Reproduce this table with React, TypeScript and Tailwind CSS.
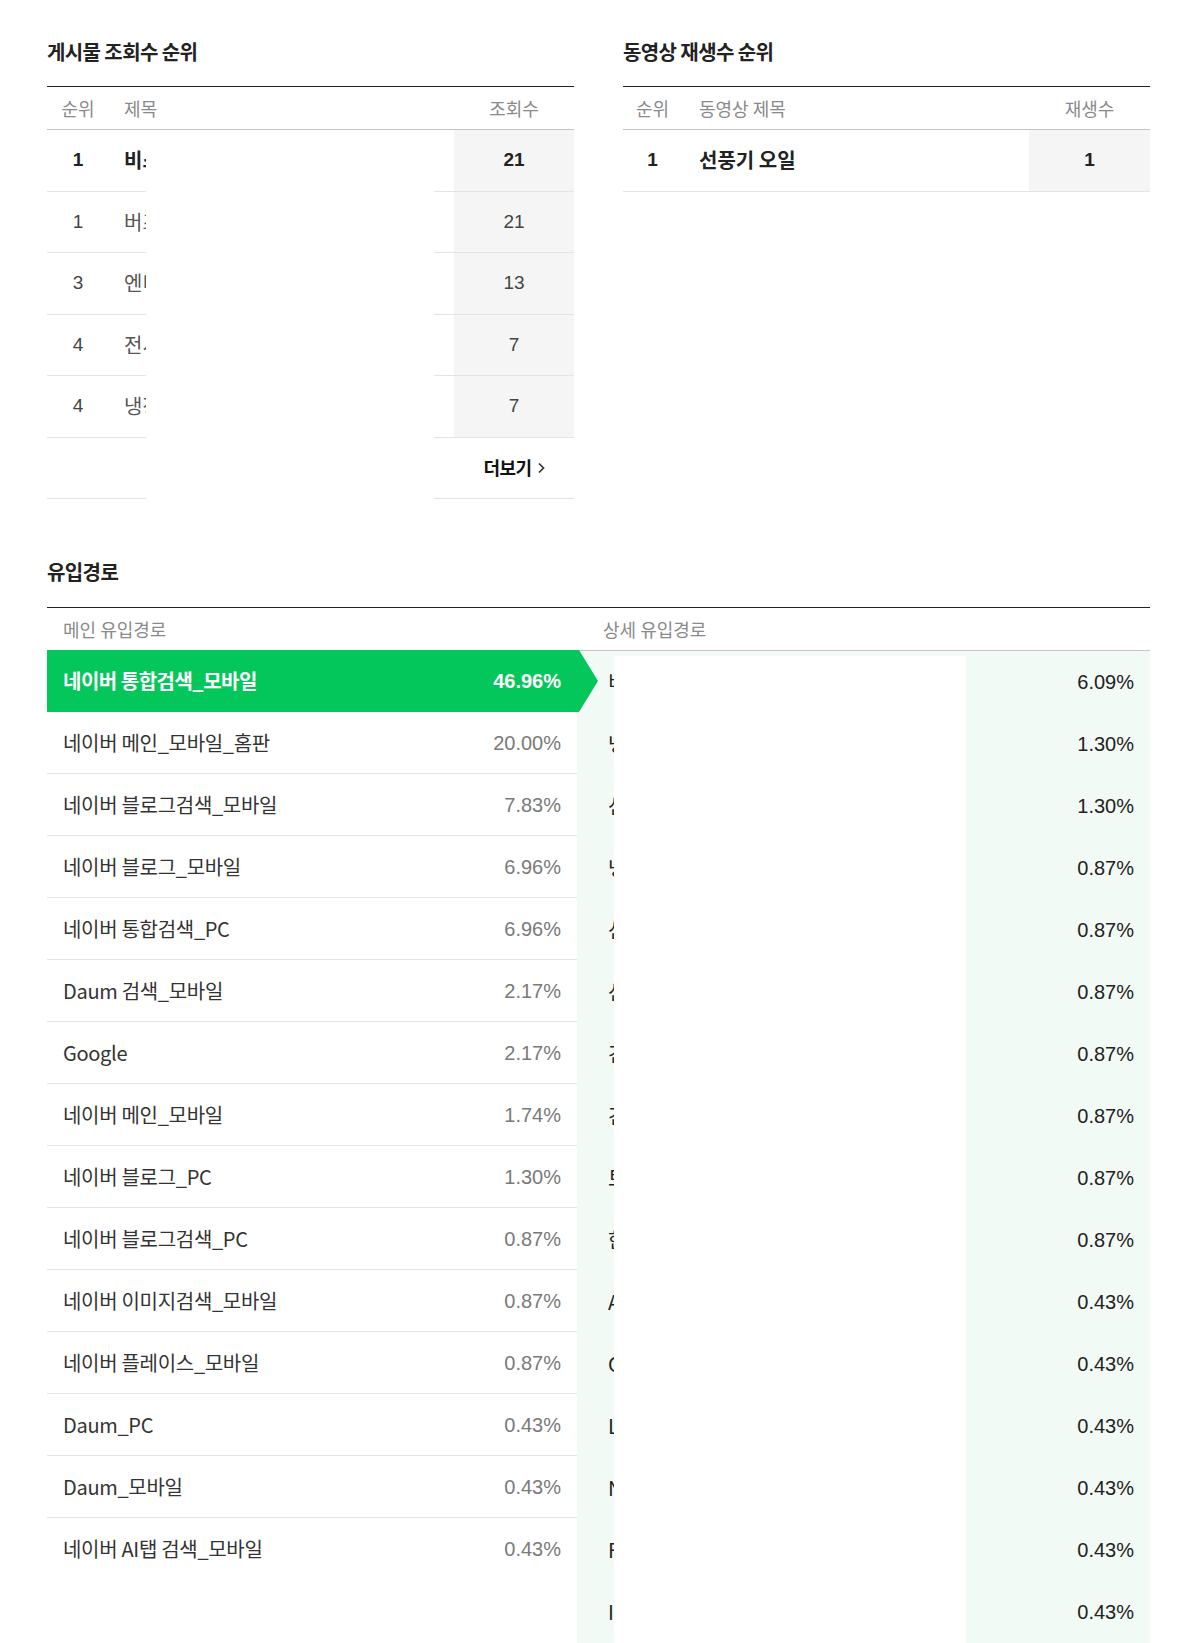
const KR = "font-['Noto_Sans_CJK_KR','Noto_Sans',sans-serif]";
const NUM = "font-['Liberation_Sans','Noto_Sans_CJK_KR',sans-serif]";

const posts = [
  { rank: 1, title: "비스포크 제트 청소기 후기", views: 21, bold: true },
  { rank: 1, title: "버즈 케이스 추천", views: 21 },
  { rank: 3, title: "엔비디아 그래픽카드 비교", views: 13 },
  { rank: 4, title: "전시회 방문 후기", views: 7 },
  { rank: 4, title: "냉장고 정리 꿀팁", views: 7 },
];

const mainRoutes = [
  { label: "네이버 통합검색_모바일", pct: "46.96%" },
  { label: "네이버 메인_모바일_홈판", pct: "20.00%" },
  { label: "네이버 블로그검색_모바일", pct: "7.83%" },
  { label: "네이버 블로그_모바일", pct: "6.96%" },
  { label: "네이버 통합검색_PC", pct: "6.96%" },
  { label: "Daum 검색_모바일", pct: "2.17%" },
  { label: "Google", pct: "2.17%" },
  { label: "네이버 메인_모바일", pct: "1.74%" },
  { label: "네이버 블로그_PC", pct: "1.30%" },
  { label: "네이버 블로그검색_PC", pct: "0.87%" },
  { label: "네이버 이미지검색_모바일", pct: "0.87%" },
  { label: "네이버 플레이스_모바일", pct: "0.87%" },
  { label: "Daum_PC", pct: "0.43%" },
  { label: "Daum_모바일", pct: "0.43%" },
  { label: "네이버 AI탭 검색_모바일", pct: "0.43%" },
];

const details = [
  { label: "비스포크 냉장고", pct: "6.09%" },
  { label: "냉장고 필터", pct: "1.30%" },
  { label: "선풍기 오일", pct: "1.30%" },
  { label: "냉장고 정리", pct: "0.87%" },
  { label: "선풍기 분해", pct: "0.87%" },
  { label: "선풍기 청소", pct: "0.87%" },
  { label: "건조기 필터", pct: "0.87%" },
  { label: "건조기 청소", pct: "0.87%" },
  { label: "토스터기", pct: "0.87%" },
  { label: "한일 선풍기", pct: "0.87%" },
  { label: "AirPods", pct: "0.43%" },
  { label: "Coway", pct: "0.43%" },
  { label: "LG 퓨리케어", pct: "0.43%" },
  { label: "Nespresso", pct: "0.43%" },
  { label: "Fan oil", pct: "0.43%" },
  { label: "Iphone", pct: "0.43%" },
  { label: "Dyson", pct: "0.43%" },
];

function SectionTitle({ children }: { children: React.ReactNode }) {
  return (
    <h3 className={`${KR} h-[26px] text-[20px] leading-[26px] font-bold tracking-[-0.6px] text-[#222]`}>
      {children}
    </h3>
  );
}

function PostsTable() {
  return (
    <div>
      <SectionTitle>게시물 조회수 순위</SectionTitle>
      <div className="mt-[21px]">
        <div className={`${KR} flex h-[44px] items-center border-t border-b border-t-[#222] border-b-[#c4c4c4] text-[18px] text-[#8a8a8a]`}>
          <span className="w-[62px] text-center">순위</span>
          <span className="flex-1 pl-[15px]">제목</span>
          <span className="w-[120px] text-center">조회수</span>
        </div>
        {posts.map((p, i) => (
          <div key={i} className="flex h-[61.5px]">
            <div className="flex w-[99px] items-center border-b border-[#e4e4e4]">
              <span className={`${NUM} w-[62px] text-center text-[19px] ${p.bold ? "font-bold text-[#222]" : "text-[#444]"}`}>
                {p.rank}
              </span>
              <span className="ml-[15px] w-[22px] overflow-hidden whitespace-nowrap">
                <span className={`${KR} text-[20px] ${p.bold ? "font-bold text-[#222]" : "text-[#555]"}`}>{p.title}</span>
              </span>
            </div>
            <div className="w-[288px]" />
            <div className="flex flex-1 border-b border-[#e4e4e4]">
              <div className="w-[20px]" />
              <div className={`${NUM} flex flex-1 items-center justify-center bg-[#f5f5f5] text-[19px] ${p.bold ? "font-bold text-[#222]" : "text-[#444]"}`}>
                {p.views}
              </div>
            </div>
          </div>
        ))}
        <div className="flex h-[61.5px]">
          <div className="w-[99px] border-b border-[#e4e4e4]" />
          <div className="w-[288px]" />
          <div className="flex flex-1 items-center border-b border-[#e4e4e4] pl-[20px]">
            <span className={`${KR} flex flex-1 items-center justify-center gap-[6px] text-[18px] font-bold tracking-[-0.5px] text-[#111]`}>
              더보기
              <svg width="7" height="12" viewBox="0 0 7 12" fill="none" stroke="#333" strokeWidth="1.7">
                <path d="M1 1.5l4.5 4.5L1 10.5" />
              </svg>
            </span>
          </div>
        </div>
      </div>
    </div>
  );
}

function VideoTable() {
  return (
    <div>
      <SectionTitle>동영상 재생수 순위</SectionTitle>
      <div className="mt-[21px]">
        <div className={`${KR} flex h-[44px] items-center border-t border-b border-t-[#222] border-b-[#c4c4c4] text-[18px] text-[#8a8a8a]`}>
          <span className="w-[59px] text-center">순위</span>
          <span className="flex-1 pl-[17px]">동영상 제목</span>
          <span className="w-[121px] text-center">재생수</span>
        </div>
        <div className="flex h-[61.5px] items-stretch border-b border-[#e4e4e4]">
          <span className={`${NUM} flex w-[59px] items-center justify-center text-[19px] font-bold text-[#222]`}>1</span>
          <span className={`${KR} flex flex-1 items-center pl-[17px] text-[20px] font-bold text-[#222]`}>선풍기 오일</span>
          <span className={`${NUM} flex w-[121px] items-center justify-center bg-[#f5f5f5] text-[19px] font-bold text-[#222]`}>1</span>
        </div>
      </div>
    </div>
  );
}

function Inflow() {
  return (
    <div className="mt-[60px]">
      <SectionTitle>유입경로</SectionTitle>
      <div className={`${KR} mt-[22px] flex h-[43px] items-center border-t border-[#222] text-[18px] text-[#8a8a8a]`}>
        <span className="w-[530px] pl-[16px]">메인 유입경로</span>
        <span className="pl-[26px]">상세 유입경로</span>
      </div>
      <div className="flex">
        <div className="w-[530px] shrink-0">
          {mainRoutes.map((r, i) =>
            i === 0 ? (
              <div
                key={i}
                className="relative z-10 flex h-[62px] w-[551px] bg-[#03c75a] [clip-path:polygon(0_0,532px_0,100%_50%,532px_100%,0_100%)]"
              >
                <div className="flex w-[530px] items-center justify-between px-[16px]">
                  <span className={`${KR} text-[20px] font-bold tracking-[-0.5px] text-white`}>{r.label}</span>
                  <span className={`${NUM} text-[20px] font-bold text-white`}>{r.pct}</span>
                </div>
              </div>
            ) : (
              <div
                key={i}
                className={`flex h-[62px] items-center justify-between px-[16px] ${i < mainRoutes.length - 1 ? "border-b border-[#e4e4e4]" : ""}`}
              >
                <span className={`${KR} text-[20px] tracking-[-0.3px] text-[#333]`}>{r.label}</span>
                <span className={`${NUM} text-[20px] text-[#7a7a7a]`}>{r.pct}</span>
              </div>
            )
          )}
        </div>
        <div className="flex flex-1 border-t border-[#c4c4c4] bg-[#f2faf5]">
          <div className="w-[37px] shrink-0">
            {details.map((d, i) => (
              <div key={i} className="flex h-[62px] items-center pl-[31px]">
                <span className="w-[6px] overflow-hidden whitespace-nowrap">
                  <span className={`${KR} text-[20px] text-[#222]`}>{d.label}</span>
                </span>
              </div>
            ))}
          </div>
          <div className="w-[352px] shrink-0 pt-[5px]">
            <div className="h-full bg-white" />
          </div>
          <div className="flex-1">
            {details.map((d, i) => (
              <div key={i} className={`${NUM} flex h-[62px] items-center justify-end pr-[16px] text-[20px] text-[#222]`}>
                {d.pct}
              </div>
            ))}
          </div>
        </div>
      </div>
    </div>
  );
}

export default function App() {
  return (
    <div className="min-h-screen bg-white px-[47px] pt-[39px]">
      <div className="w-[1103px]">
        <div className="grid grid-cols-[527px_527px] gap-x-[49px]">
          <PostsTable />
          <VideoTable />
        </div>
        <Inflow />
      </div>
    </div>
  );
}
